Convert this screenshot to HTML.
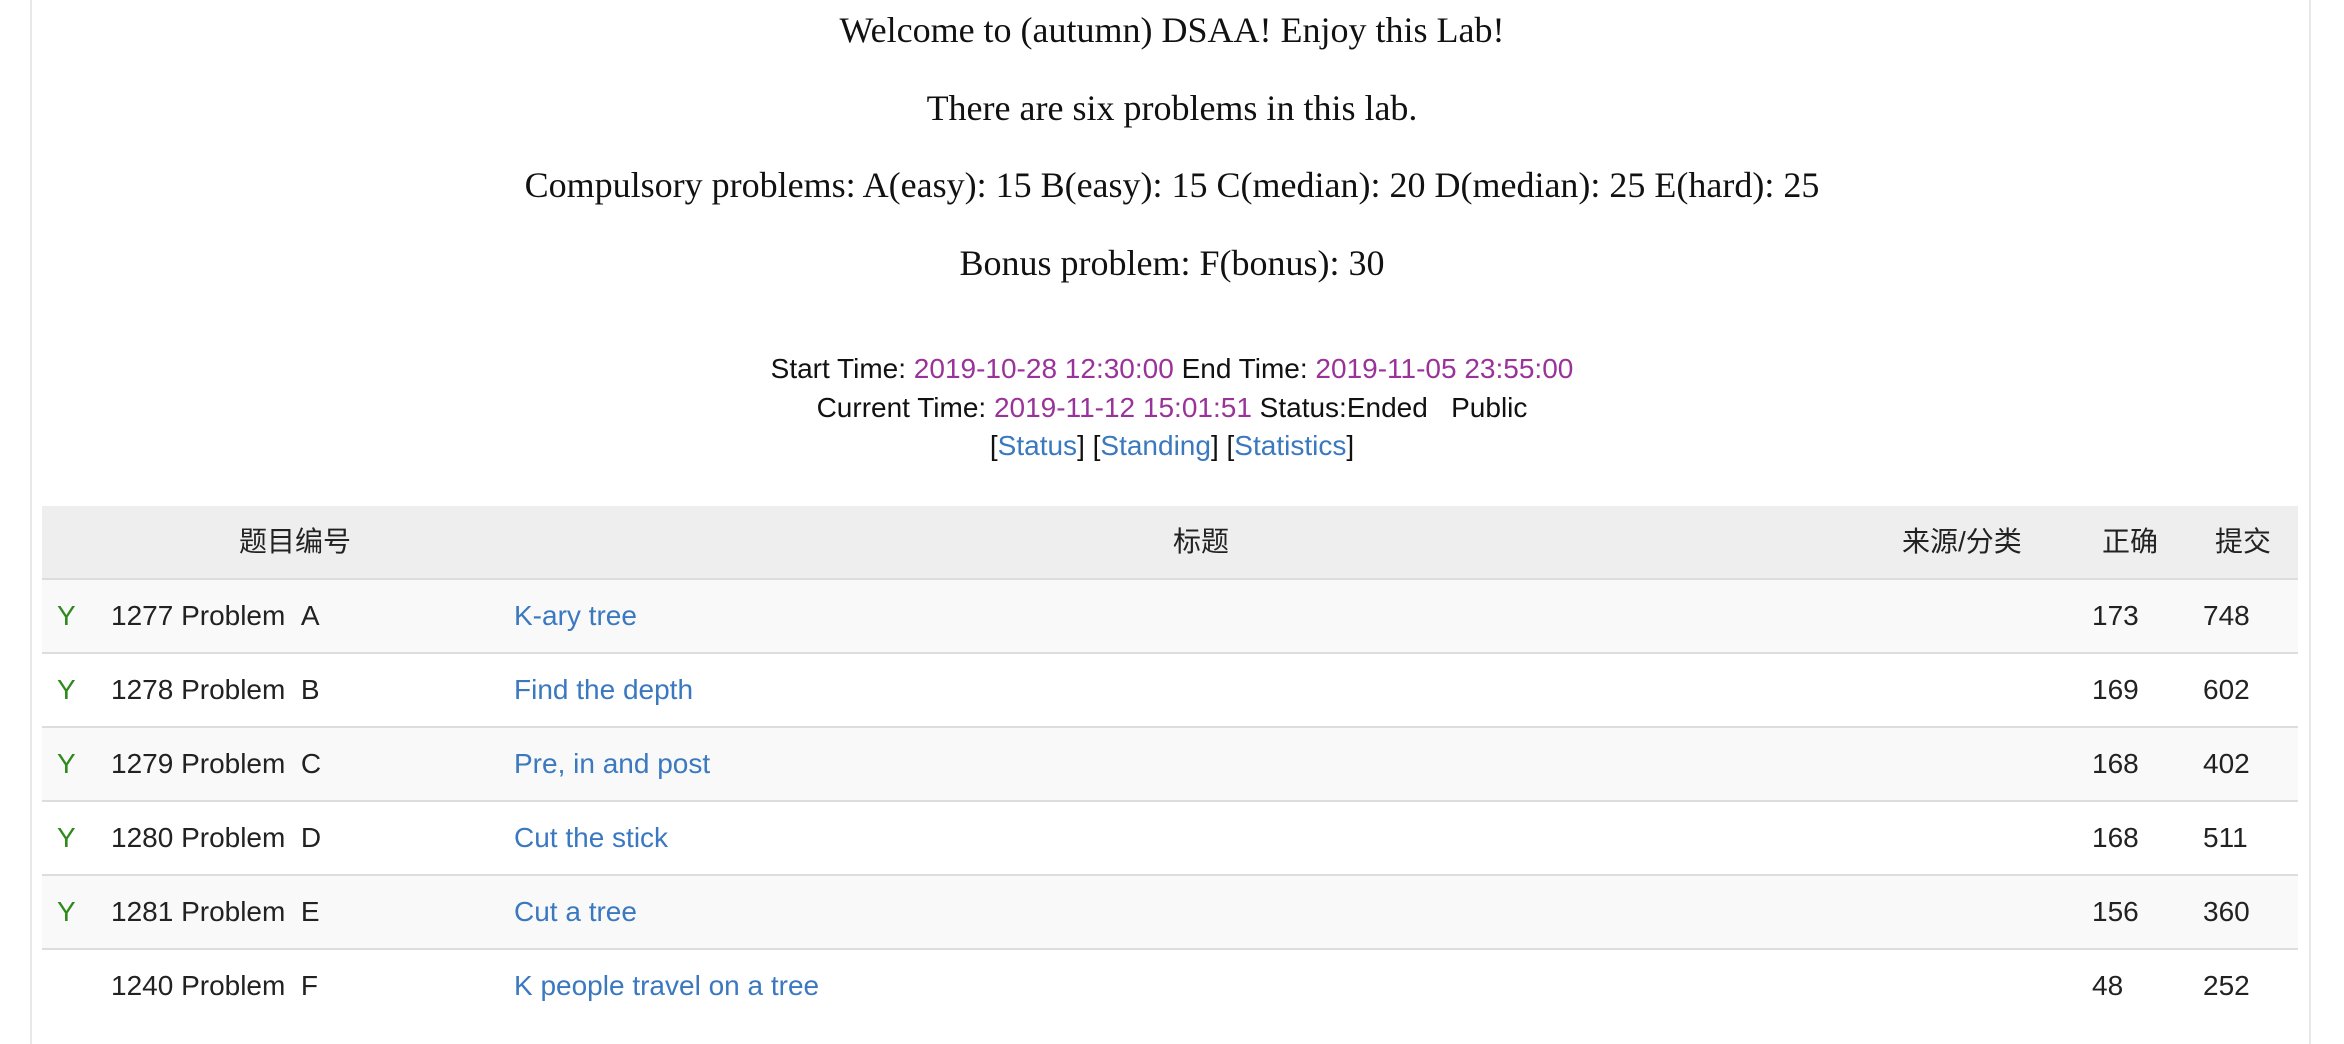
<!DOCTYPE html>
<html><head><meta charset="utf-8"><style>
body{margin:0;width:2344px;height:1044px;background:#fff;position:relative;overflow:hidden;font-family:"Liberation Sans","Noto Sans CJK SC",sans-serif;color:#222}
.vl{position:absolute;top:0;height:1044px;width:2px;background:#e8e8e8}
.s{position:absolute;left:0;width:2344px;text-align:center;font-family:"Liberation Serif","Noto Serif CJK SC",serif;font-size:36px;color:#111;line-height:40px}
.t{position:absolute;left:0;width:2344px;text-align:center;font-size:28px;line-height:38px;color:#111}
.p{color:#993399}.a{color:#3a78c0}
.row{position:absolute;left:42px;width:2256px;height:72px;border-bottom:2px solid #ddd}
.c{position:absolute;top:0;line-height:72px;font-size:28px;white-space:nowrap}
.y{color:#2f8a1c}
</style></head><body>
<div class="vl" style="left:30px"></div>
<div class="vl" style="left:2309px"></div>
<div class="s" style="top:10px">Welcome to (autumn) DSAA! Enjoy this Lab!</div>
<div class="s" style="top:88px">There are six problems in this lab.</div>
<div class="s" style="top:165px">Compulsory problems: A(easy): 15 B(easy): 15 C(median): 20 D(median): 25 E(hard): 25</div>
<div class="s" style="top:243px">Bonus problem: F(bonus): 30</div>
<div class="t" style="top:350px">Start Time: <span class="p">2019-10-28 12:30:00</span> End Time: <span class="p">2019-11-05 23:55:00</span></div>
<div class="t" style="top:389px">Current Time: <span class="p">2019-11-12 15:01:51</span> Status:Ended &nbsp; Public</div>
<div class="t" style="top:427px">[<span class="a">Status</span>] [<span class="a">Standing</span>] [<span class="a">Statistics</span>]</div>

<div class="row" style="top:506px;background:#eee">
<span class="c" style="left:197px">题目编号</span>
<span class="c" style="left:1131px">标题</span>
<span class="c" style="left:1860px">来源/分类</span>
<span class="c" style="left:2060px">正确</span>
<span class="c" style="left:2173px">提交</span>
</div>
<div class="row" style="top:580px;background:#f9f9f9"><span class="c y" style="left:15px">Y</span><span class="c" style="left:69px">1277 Problem &nbsp;A</span><span class="c a" style="left:472px">K-ary tree</span><span class="c" style="left:2050px">173</span><span class="c" style="left:2161px">748</span></div>
<div class="row" style="top:654px"><span class="c y" style="left:15px">Y</span><span class="c" style="left:69px">1278 Problem &nbsp;B</span><span class="c a" style="left:472px">Find the depth</span><span class="c" style="left:2050px">169</span><span class="c" style="left:2161px">602</span></div>
<div class="row" style="top:728px;background:#f9f9f9"><span class="c y" style="left:15px">Y</span><span class="c" style="left:69px">1279 Problem &nbsp;C</span><span class="c a" style="left:472px">Pre, in and post</span><span class="c" style="left:2050px">168</span><span class="c" style="left:2161px">402</span></div>
<div class="row" style="top:802px"><span class="c y" style="left:15px">Y</span><span class="c" style="left:69px">1280 Problem &nbsp;D</span><span class="c a" style="left:472px">Cut the stick</span><span class="c" style="left:2050px">168</span><span class="c" style="left:2161px">511</span></div>
<div class="row" style="top:876px;background:#f9f9f9"><span class="c y" style="left:15px">Y</span><span class="c" style="left:69px">1281 Problem &nbsp;E</span><span class="c a" style="left:472px">Cut a tree</span><span class="c" style="left:2050px">156</span><span class="c" style="left:2161px">360</span></div>
<div class="row" style="top:950px;border-bottom:none"><span class="c" style="left:69px">1240 Problem &nbsp;F</span><span class="c a" style="left:472px">K people travel on a tree</span><span class="c" style="left:2050px">48</span><span class="c" style="left:2161px">252</span></div>
</body></html>
